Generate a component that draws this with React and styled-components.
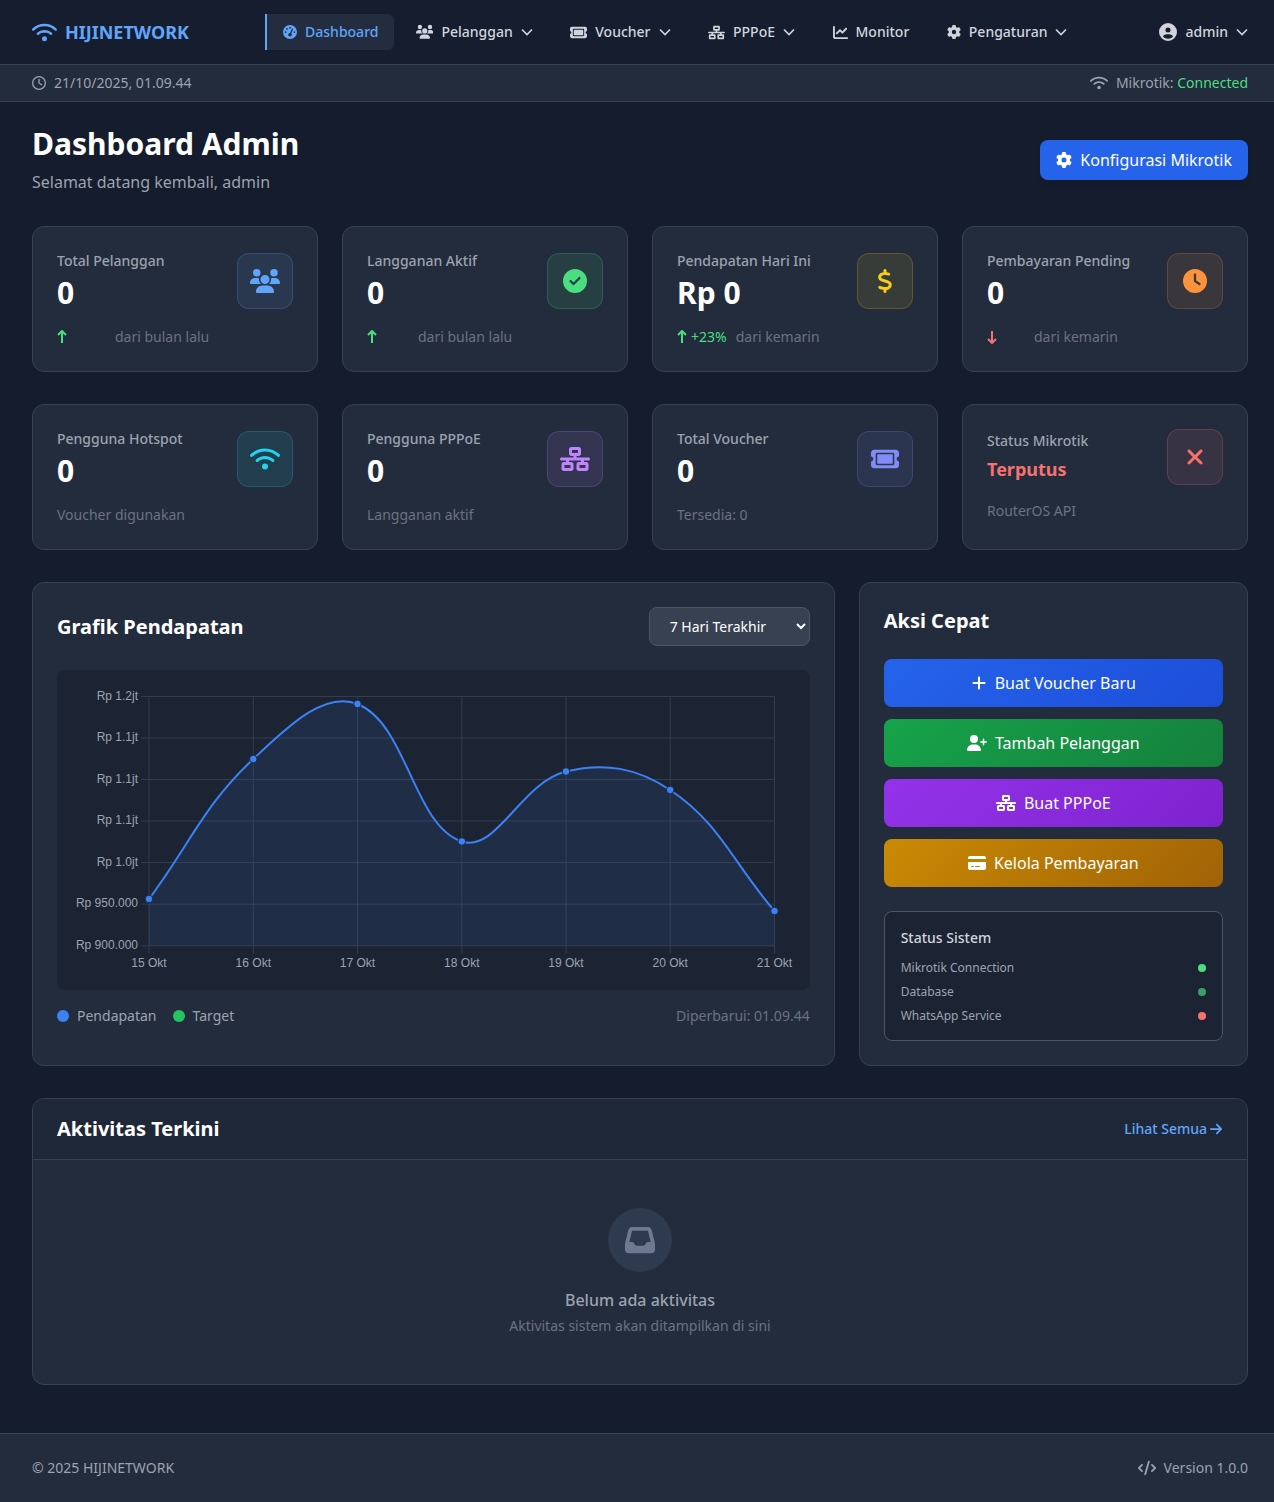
import styled, { createGlobalStyle } from "styled-components";
import {
  FaWifi,
  FaGaugeHigh,
  FaUsers,
  FaTicket,
  FaNetworkWired,
  FaChartLine,
  FaGear,
  FaCircleUser,
  FaRegClock,
  FaCircleCheck,
  FaDollarSign,
  FaClock,
  FaXmark,
  FaPlus,
  FaUserPlus,
  FaCreditCard,
  FaInbox,
  FaArrowRight,
  FaCode,
} from "react-icons/fa6";

const GlobalStyle = createGlobalStyle`
  * {
    box-sizing: border-box;
  }
  body {
    margin: 0;
    background-color: #151c2e;
    color: #ffffff;
    font-family: "Noto Sans", "Liberation Sans", sans-serif;
  }
`;

const Header = styled.header`
  height: 65px;
  padding: 0 26px 0 32px;
  display: flex;
  align-items: center;
  background-color: #161d2f;
  border-bottom: 1px solid #364254;
`;

const Logo = styled.div`
  display: flex;
  align-items: center;
  gap: 8px;
  color: #60a5fa;
  font-size: 18px;
  font-weight: 700;
  line-height: 28px;
`;

const Nav = styled.nav`
  margin-left: 76px;
  display: flex;
  align-items: center;
  gap: 5.5px;
`;

const NavItem = styled.div`
  height: 36px;
  padding: 0 16px;
  display: flex;
  align-items: center;
  gap: 8px;
  font-size: 14px;
  line-height: 20px;
  font-weight: 500;
  color: ${(p) => (p.$active ? "#60a5fa" : "#d1d5db")};
  background-color: ${(p) => (p.$active ? "#232d3f" : "transparent")};
  border-left: ${(p) => (p.$active ? "2px solid #60a5fa" : "none")};
  border-radius: ${(p) => (p.$active ? "0 6px 6px 0" : "6px")};
`;

const UserMenu = styled.div`
  margin-left: auto;
  display: flex;
  align-items: center;
  gap: 8px;
  font-size: 14px;
  line-height: 20px;
  font-weight: 500;
  color: #d1d5db;
`;

const SubBar = styled.div`
  height: 37px;
  padding: 0 26px 0 32px;
  display: flex;
  align-items: center;
  justify-content: space-between;
  background-color: #232c3d;
  border-bottom: 1px solid #364254;
  font-size: 14px;
  line-height: 20px;
  color: #9ca3af;
`;

const SubItem = styled.div`
  display: flex;
  align-items: center;
  gap: 8px;
`;

const Connected = styled.span`
  color: #4ade80;
`;

const Main = styled.main`
  padding: 24px 26px 48px 32px;
`;

const PageHead = styled.div`
  margin-bottom: 32px;
  display: flex;
  align-items: center;
  justify-content: space-between;
`;

const PageTitle = styled.h1`
  margin: 0;
  font-size: 30px;
  line-height: 36px;
  font-weight: 700;
`;

const PageSub = styled.p`
  margin: 8px 0 0;
  font-size: 16px;
  line-height: 24px;
  color: #9ca3af;
`;

const ConfigButton = styled.button`
  height: 40px;
  padding: 0 16px;
  display: flex;
  align-items: center;
  gap: 8px;
  border: none;
  border-radius: 8px;
  background-color: #2563eb;
  color: #ffffff;
  font-family: inherit;
  font-size: 16px;
  box-shadow: 0 4px 6px -1px rgba(0, 0, 0, 0.1);
`;

const StatGrid = styled.div`
  display: grid;
  grid-template-columns: repeat(4, 1fr);
  gap: 32px 24px;
  margin-bottom: 32px;
`;

const Panel = styled.section`
  background-color: #232c3d;
  border: 1px solid #364254;
  border-radius: 12px;
`;

const StatCard = styled(Panel)`
  padding: 24px;
`;

const StatTop = styled.div`
  display: flex;
  align-items: center;
  justify-content: space-between;
`;

const StatLabel = styled.div`
  font-size: 14px;
  line-height: 20px;
  font-weight: 500;
  color: #9ca3af;
`;

const StatValue = styled.div`
  margin-top: 4px;
  font-size: 30px;
  line-height: 36px;
  font-weight: 700;
`;

const StatAlert = styled.div`
  margin-top: 4px;
  font-size: 18px;
  line-height: 28px;
  font-weight: 700;
  color: #f87171;
`;

const StatIcon = styled.div`
  width: 56px;
  height: 56px;
  display: flex;
  align-items: center;
  justify-content: center;
  border-radius: 12px;
  color: ${(p) => p.$color};
  background-color: ${(p) => p.$color}1a;
  border: 1px solid ${(p) => p.$color}33;
`;

const StatFoot = styled.div`
  margin-top: 16px;
  display: flex;
  align-items: center;
  font-size: 14px;
  line-height: 20px;
  color: #6b7280;
`;

const Delta = styled.span`
  margin-left: 4px;
  color: #4ade80;
  font-size: 14px;
`;

const FootNote = styled.span`
  margin-left: ${(p) => p.$offset || 0}px;
`;

const MiddleGrid = styled.div`
  display: grid;
  grid-template-columns: repeat(3, 1fr);
  gap: 24px;
`;

const ChartPanel = styled(Panel)`
  grid-column: span 2;
  padding: 24px;
`;

const ChartHead = styled.div`
  margin-bottom: 24px;
  display: flex;
  align-items: center;
  justify-content: space-between;
`;

const SectionTitle = styled.h2`
  margin: 0;
  font-size: 20px;
  line-height: 28px;
  font-weight: 700;
`;

const RangeSelect = styled.select`
  width: 161px;
  height: 39px;
  padding: 0 12px 0 16px;
  background-color: #374151;
  border: 1px solid #4b5563;
  border-radius: 8px;
  color: #ffffff;
  font-family: inherit;
  font-size: 14px;
`;

const ChartBox = styled.div`
  height: 320px;
  background-color: #1c2433;
  border-radius: 8px;
  overflow: hidden;

  svg {
    display: block;
  }

  text {
    font-family: "Liberation Sans", Arial, sans-serif;
    font-size: 12px;
    fill: #9ca3af;
  }
`;

const ChartFoot = styled.div`
  margin-top: 16px;
  display: flex;
  align-items: center;
  justify-content: space-between;
  font-size: 14px;
  line-height: 20px;
  color: #6b7280;
`;

const Legend = styled.div`
  display: flex;
  align-items: center;
  gap: 16px;
  color: #9ca3af;
`;

const LegendItem = styled.div`
  display: flex;
  align-items: center;
  gap: 8px;
`;

const LegendDot = styled.span`
  width: 12px;
  height: 12px;
  border-radius: 50%;
  background-color: ${(p) => p.$color};
`;

const ActionPanel = styled(Panel)`
  padding: 24px;
`;

const ActionList = styled.div`
  margin-top: 24px;
  display: flex;
  flex-direction: column;
  gap: 12px;
`;

const ActionButton = styled.button`
  height: 48px;
  display: flex;
  align-items: center;
  justify-content: center;
  gap: 8px;
  border: none;
  border-radius: 8px;
  background: linear-gradient(135deg, ${(p) => p.$from}, ${(p) => p.$to});
  color: #ffffff;
  font-family: inherit;
  font-size: 16px;
`;

const StatusBox = styled.div`
  margin-top: 24px;
  padding: 16px;
  background-color: #1c2433;
  border: 1px solid #4b5563;
  border-radius: 8px;
`;

const StatusTitle = styled.div`
  margin-bottom: 12px;
  font-size: 14px;
  line-height: 20px;
  font-weight: 500;
  color: #d1d5db;
`;

const StatusRow = styled.div`
  margin-top: 8px;
  display: flex;
  align-items: center;
  justify-content: space-between;
  font-size: 12px;
  line-height: 16px;
  color: #9ca3af;

  &:first-of-type {
    margin-top: 0;
  }
`;

const StatusDot = styled.span`
  width: 8px;
  height: 8px;
  border-radius: 50%;
  background-color: ${(p) => p.$color};
`;

const ActivityPanel = styled(Panel)`
  margin-top: 32px;
  overflow: hidden;
`;

const ActivityHead = styled.div`
  height: 61px;
  padding: 0 24px;
  display: flex;
  align-items: center;
  justify-content: space-between;
  background-color: #1f2838;
  border-bottom: 1px solid #364254;
`;

const SeeAll = styled.a`
  display: flex;
  align-items: center;
  gap: 2px;
  font-size: 14px;
  line-height: 20px;
  font-weight: 500;
  color: #60a5fa;
`;

const EmptyState = styled.div`
  padding: 48px 24px;
  display: flex;
  flex-direction: column;
  align-items: center;
`;

const EmptyIcon = styled.div`
  width: 64px;
  height: 64px;
  margin-bottom: 16px;
  display: flex;
  align-items: center;
  justify-content: center;
  border-radius: 50%;
  background-color: #2e3a4d;
  color: #6b7a90;
`;

const EmptyTitle = styled.div`
  font-size: 16px;
  line-height: 24px;
  font-weight: 500;
  color: #9ca3af;
`;

const EmptySub = styled.div`
  margin-top: 4px;
  font-size: 14px;
  line-height: 20px;
  color: #6b7280;
`;

const Footer = styled.footer`
  padding: 24px 26px 24px 32px;
  display: flex;
  align-items: center;
  justify-content: space-between;
  background-color: #232c3d;
  border-top: 1px solid #364254;
  font-size: 14px;
  line-height: 20px;
  color: #9ca3af;
`;

const Chevron = () => (
  <svg width="12" height="8" viewBox="0 0 12 8" fill="none" stroke="currentColor" strokeWidth="1.6">
    <path d="M1 1.5l5 5 5-5" />
  </svg>
);

const Arrow = ({ down }) => (
  <svg
    width="10"
    height="14"
    viewBox="0 0 10 14"
    fill="none"
    stroke={down ? "#f87171" : "#4ade80"}
    strokeWidth="2"
  >
    <path d={down ? "M5 1v12M1 9l4 4 4-4" : "M5 13V1M1 5l4-4 4 4"} />
  </svg>
);

const stats = [
  { label: "Total Pelanggan", value: "0", color: "#60a5fa", icon: <FaUsers size={30} />, arrow: "up", note: "dari bulan lalu", offset: 48 },
  { label: "Langganan Aktif", value: "0", color: "#4ade80", icon: <FaCircleCheck size={24} />, arrow: "up", note: "dari bulan lalu", offset: 41 },
  { label: "Pendapatan Hari Ini", value: "Rp 0", color: "#facc15", icon: <FaDollarSign size={24} />, arrow: "up", delta: "+23%", note: "dari kemarin", offset: 9 },
  { label: "Pembayaran Pending", value: "0", color: "#fb923c", icon: <FaClock size={24} />, arrow: "down", note: "dari kemarin", offset: 37 },
  { label: "Pengguna Hotspot", value: "0", color: "#22d3ee", icon: <FaWifi size={30} />, note: "Voucher digunakan" },
  { label: "Pengguna PPPoE", value: "0", color: "#c084fc", icon: <FaNetworkWired size={30} />, note: "Langganan aktif" },
  { label: "Total Voucher", value: "0", color: "#818cf8", icon: <FaTicket size={28} />, note: "Tersedia: 0" },
  { label: "Status Mikrotik", alert: "Terputus", color: "#f87171", icon: <FaXmark size={24} />, note: "RouterOS API" },
];

const actions = [
  { label: "Buat Voucher Baru", from: "#2563eb", to: "#1d4ed8", icon: <FaPlus size={16} /> },
  { label: "Tambah Pelanggan", from: "#16a34a", to: "#15803d", icon: <FaUserPlus size={20} /> },
  { label: "Buat PPPoE", from: "#9333ea", to: "#7e22ce", icon: <FaNetworkWired size={20} /> },
  { label: "Kelola Pembayaran", from: "#ca8a04", to: "#a16207", icon: <FaCreditCard size={18} /> },
];

const services = [
  { name: "Mikrotik Connection", color: "#4ade80" },
  { name: "Database", color: "#3d9e6b" },
  { name: "WhatsApp Service", color: "#f87171" },
];

// chart coords are relative to the chart box
const gridX = [92, 196.3, 300.5, 404.8, 509, 613.2, 717.5];
const gridY = [26.5, 68, 109.5, 151, 192.5, 234.2, 275.8];
const yLabels = ["Rp 1.2jt", "Rp 1.1jt", "Rp 1.1jt", "Rp 1.1jt", "Rp 1.0jt", "Rp 950.000", "Rp 900.000"];
const xLabels = ["15 Okt", "16 Okt", "17 Okt", "18 Okt", "19 Okt", "20 Okt", "21 Okt"];
const points = [
  [92, 229],
  [196.3, 89],
  [300.5, 34],
  [404.8, 171.5],
  [509, 101.5],
  [613.2, 120],
  [717.5, 241],
];

// same spline as chart.js with tension .4
const buildCurve = (pts, t) => {
  const ctrl = pts.map((p, i) => {
    const prev = pts[i - 1] || p;
    const next = pts[i + 1] || p;
    const d1 = Math.hypot(p[0] - prev[0], p[1] - prev[1]);
    const d2 = Math.hypot(next[0] - p[0], next[1] - p[1]);
    const total = d1 + d2 || 1;
    const a = (t * d1) / total;
    const b = (t * d2) / total;
    return {
      before: [p[0] - a * (next[0] - prev[0]), p[1] - a * (next[1] - prev[1])],
      after: [p[0] + b * (next[0] - prev[0]), p[1] + b * (next[1] - prev[1])],
    };
  });
  let d = `M${pts[0][0]} ${pts[0][1]}`;
  for (let i = 1; i < pts.length; i++) {
    const c1 = ctrl[i - 1].after;
    const c2 = ctrl[i].before;
    d += ` C${c1[0]} ${c1[1]} ${c2[0]} ${c2[1]} ${pts[i][0]} ${pts[i][1]}`;
  }
  return d;
};

const RevenueChart = () => {
  const curve = buildCurve(points, 0.4);
  const bottom = gridY[gridY.length - 1];
  return (
    <svg width="753" height="320" viewBox="0 0 753 320">
      {gridY.map((y, i) => (
        <g key={y}>
          <line x1="84" x2="717.5" y1={y} y2={y} stroke="#323d4e" />
          <text x="81" y={y + 3} textAnchor="end">
            {yLabels[i]}
          </text>
        </g>
      ))}
      {gridX.map((x, i) => (
        <g key={x}>
          <line x1={x} x2={x} y1={gridY[0]} y2={bottom + 8} stroke="#323d4e" />
          <text x={x} y={bottom + 21} textAnchor="middle">
            {xLabels[i]}
          </text>
        </g>
      ))}
      <path d={`${curve} L717.5 ${bottom} L92 ${bottom} Z`} fill="rgba(59,130,246,0.1)" />
      <path d={curve} fill="none" stroke="#3b82f6" strokeWidth="2" />
      {points.map((p) => (
        <circle key={p[0]} cx={p[0]} cy={p[1]} r="3.8" fill="#3b82f6" stroke="#1f2a3d" strokeWidth="1" />
      ))}
    </svg>
  );
};

const App = () => {
  return (
    <>
      <GlobalStyle />
      <Header>
        <Logo>
          <FaWifi size={25} />
          HIJINETWORK
        </Logo>
        <Nav>
          <NavItem $active>
            <FaGaugeHigh size={14} />
            Dashboard
          </NavItem>
          <NavItem>
            <FaUsers size={17.5} />
            Pelanggan
            <Chevron />
          </NavItem>
          <NavItem>
            <FaTicket size={17} />
            Voucher
            <Chevron />
          </NavItem>
          <NavItem>
            <FaNetworkWired size={17} />
            PPPoE
            <Chevron />
          </NavItem>
          <NavItem>
            <FaChartLine size={15} />
            Monitor
          </NavItem>
          <NavItem>
            <FaGear size={14} />
            Pengaturan
            <Chevron />
          </NavItem>
        </Nav>
        <UserMenu>
          <FaCircleUser size={18} />
          admin
          <Chevron />
        </UserMenu>
      </Header>
      <SubBar>
        <SubItem>
          <FaRegClock size={14} />
          21/10/2025, 01.09.44
        </SubItem>
        <SubItem>
          <FaWifi size={18} />
          <span>
            Mikrotik: <Connected>Connected</Connected>
          </span>
        </SubItem>
      </SubBar>
      <Main>
        <PageHead>
          <div>
            <PageTitle>Dashboard Admin</PageTitle>
            <PageSub>Selamat datang kembali, admin</PageSub>
          </div>
          <ConfigButton>
            <FaGear size={16} />
            Konfigurasi Mikrotik
          </ConfigButton>
        </PageHead>

        <StatGrid>
          {stats.map((s) => (
            <StatCard key={s.label}>
              <StatTop>
                <div>
                  <StatLabel>{s.label}</StatLabel>
                  {s.alert ? <StatAlert>{s.alert}</StatAlert> : <StatValue>{s.value}</StatValue>}
                </div>
                <StatIcon $color={s.color}>{s.icon}</StatIcon>
              </StatTop>
              <StatFoot>
                {s.arrow && <Arrow down={s.arrow === "down"} />}
                {s.delta && <Delta>{s.delta}</Delta>}
                <FootNote $offset={s.offset}>{s.note}</FootNote>
              </StatFoot>
            </StatCard>
          ))}
        </StatGrid>

        <MiddleGrid>
          <ChartPanel>
            <ChartHead>
              <SectionTitle>Grafik Pendapatan</SectionTitle>
              <RangeSelect defaultValue="7">
                <option value="7">7 Hari Terakhir</option>
                <option value="30">30 Hari Terakhir</option>
              </RangeSelect>
            </ChartHead>
            <ChartBox>
              <RevenueChart />
            </ChartBox>
            <ChartFoot>
              <Legend>
                <LegendItem>
                  <LegendDot $color="#3b82f6" />
                  Pendapatan
                </LegendItem>
                <LegendItem>
                  <LegendDot $color="#22c55e" />
                  Target
                </LegendItem>
              </Legend>
              <span>Diperbarui: 01.09.44</span>
            </ChartFoot>
          </ChartPanel>

          <ActionPanel>
            <SectionTitle>Aksi Cepat</SectionTitle>
            <ActionList>
              {actions.map((a) => (
                <ActionButton key={a.label} $from={a.from} $to={a.to}>
                  {a.icon}
                  {a.label}
                </ActionButton>
              ))}
            </ActionList>
            <StatusBox>
              <StatusTitle>Status Sistem</StatusTitle>
              {services.map((s) => (
                <StatusRow key={s.name}>
                  {s.name}
                  <StatusDot $color={s.color} />
                </StatusRow>
              ))}
            </StatusBox>
          </ActionPanel>
        </MiddleGrid>

        <ActivityPanel>
          <ActivityHead>
            <SectionTitle>Aktivitas Terkini</SectionTitle>
            <SeeAll>
              Lihat Semua
              <FaArrowRight size={14} />
            </SeeAll>
          </ActivityHead>
          <EmptyState>
            <EmptyIcon>
              <FaInbox size={30} />
            </EmptyIcon>
            <EmptyTitle>Belum ada aktivitas</EmptyTitle>
            <EmptySub>Aktivitas sistem akan ditampilkan di sini</EmptySub>
          </EmptyState>
        </ActivityPanel>
      </Main>
      <Footer>
        <span>© 2025 HIJINETWORK</span>
        <SubItem>
          <FaCode size={18} />
          Version 1.0.0
        </SubItem>
      </Footer>
    </>
  );
};

export default App;
